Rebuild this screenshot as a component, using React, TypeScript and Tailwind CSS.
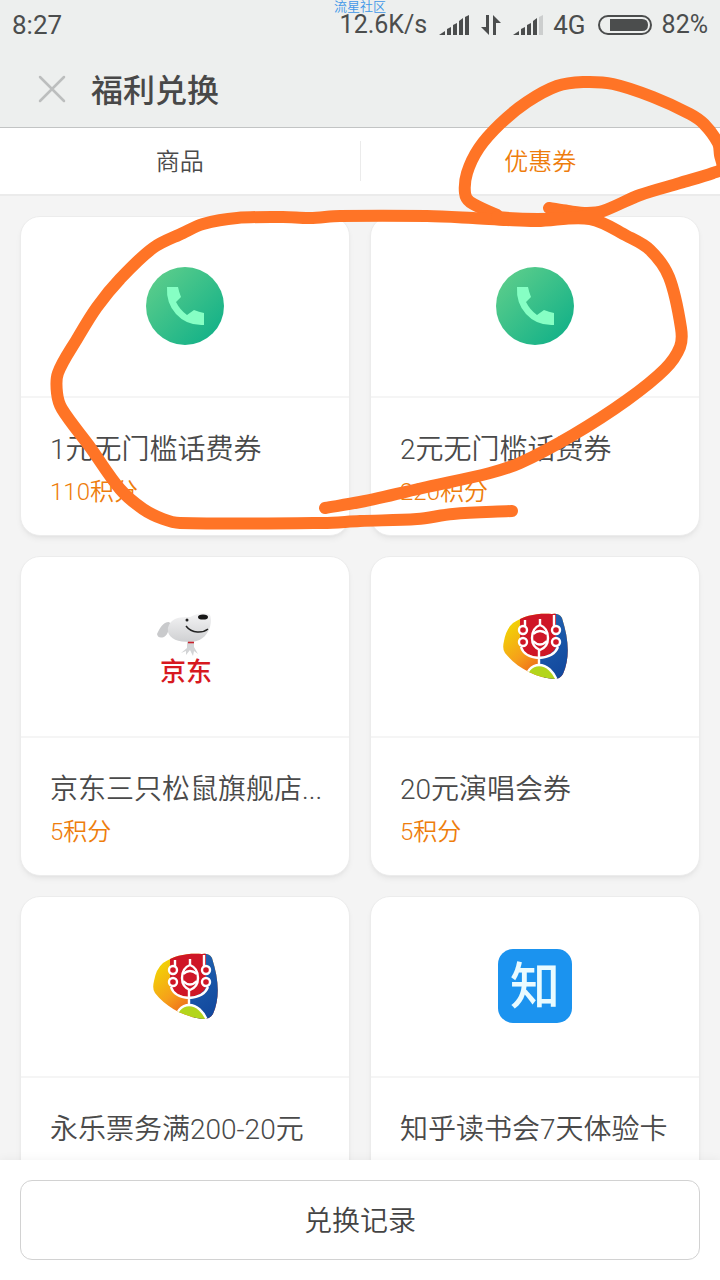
import React from 'react';

type LogoName = 'phone' | 'jd' | 'yongle' | 'zhihu';

interface Coupon {
  title: string;
  points?: number;
  logo: LogoName;
}

const coupons: Coupon[] = [
  { title: '1元无门槛话费券', points: 110, logo: 'phone' },
  { title: '2元无门槛话费券', points: 220, logo: 'phone' },
  { title: '京东三只松鼠旗舰店...', points: 5, logo: 'jd' },
  { title: '20元演唱会券', points: 5, logo: 'yongle' },
  { title: '永乐票务满200-20元', logo: 'yongle' },
  { title: '知乎读书会7天体验卡', logo: 'zhihu' },
];

type Point = [number, number];

const tabLoop: Point[] = [
  [549, 208], [568, 211], [587, 213], [603, 211], [640, 195], [680, 183], [713, 173], [722, 168],
  [720, 155], [718, 143], [704, 124], [690, 114], [653, 97], [613, 84], [583, 82], [557, 86],
  [527, 102], [500, 124], [479, 148], [467, 173], [465, 193], [470, 202], [497, 215],
];

const cardLoop: Point[] = [
  [512, 511], [453, 514], [417, 519], [360, 521], [323, 523], [180, 523], [163, 519], [143, 509],
  [120, 489], [90, 447], [62, 409], [57, 393], [58, 373], [77, 339], [97, 307], [120, 279],
  [153, 248], [183, 233], [203, 224], [237, 218], [283, 217], [310, 218], [340, 216], [427, 216],
  [473, 218], [507, 220], [537, 221], [590, 219], [627, 236], [650, 250], [669, 277], [681, 328],
  [680, 347], [665, 369], [627, 400], [573, 435], [520, 463], [490, 473], [427, 487], [360, 502],
  [325, 508],
];

// Unit direction of the curve at point i
const direction = (pts: Point[], i: number): Point => {
  const a = pts[Math.max(i - 1, 0)];
  const b = pts[Math.min(i + 1, pts.length - 1)];
  const len = Math.hypot(b[0] - a[0], b[1] - a[1]);
  return [(b[0] - a[0]) / len, (b[1] - a[1]) / len];
};

const smooth = (pts: Point[]) => {
  let d = `M${pts[0][0]} ${pts[0][1]}`;
  for (let i = 0; i < pts.length - 1; i++) {
    const [x1, y1] = pts[i];
    const [x2, y2] = pts[i + 1];
    const reach = Math.hypot(x2 - x1, y2 - y1) / 3;
    const from = direction(pts, i);
    const to = direction(pts, i + 1);
    d += `C${x1 + from[0] * reach} ${y1 + from[1] * reach} ${x2 - to[0] * reach} ${y2 - to[1] * reach} ${x2} ${y2}`;
  }
  return d;
};

const Marker: React.FC = () => (
  <svg
    viewBox="0 0 720 540"
    aria-hidden="true"
    className="absolute left-0 top-0 w-full pointer-events-none"
    fill="none"
    stroke="#ff7426"
    strokeWidth="12"
    strokeLinecap="round"
    strokeLinejoin="round"
  >
    <path d={smooth(tabLoop)} />
    <path d={smooth(cardLoop)} />
    <path d="M497 217Q545 222 597 215" />
  </svg>
);

const PhoneLogo: React.FC<{ id: string }> = ({ id }) => (
  <svg width="80" height="80" viewBox="0 0 80 80" aria-hidden="true">
    <defs>
      <linearGradient id={id} x1="0.1" y1="0.1" x2="0.9" y2="0.9">
        <stop offset="0" stopColor="#5bcd8b" />
        <stop offset="1" stopColor="#13b188" />
      </linearGradient>
    </defs>
    <circle cx="40" cy="40" r="39" fill={`url(#${id})`} />
    <path
      d="M22 21H33Q34 26 36 31L31 36Q35 44 42 49L49 44Q54 46 59 47V59Q42 60 31 48Q21 37 22 21Z"
      fill="#86ffc4"
    />
  </svg>
);

const JdLogo: React.FC = () => (
  <svg width="90" height="90" viewBox="0 0 90 90" aria-hidden="true">
    <defs>
      <linearGradient id="dog" x1="0" y1="0" x2="0" y2="1">
        <stop offset="0" stopColor="#f4f4f5" />
        <stop offset="1" stopColor="#cfd0d2" />
      </linearGradient>
    </defs>
    <path d="M29 21C23 21 20 27 17 33Q18 38 24 36C29 33 29 26 31 23Z" fill="#c9cacc" />
    <path d="M47 41H54L54 46L58 53L54 50L53 55L50 49L46 54L46 50L41 52L47 47Z" fill="#d3d4d6" />
    <path
      d="M29 24C33 16 41 16 50 16C57 12 66 11 70 14Q72 18 70 26C67 36 59 41 50 41C38 41 30 38 28 31Q27 27 29 24Z"
      fill="url(#dog)"
    />
    <ellipse cx="63" cy="16" rx="5" ry="2.6" fill="#171717" />
    <circle cx="47" cy="19" r="1.5" fill="#222" />
    <path d="M46 25C52 33 63 32 68 28" fill="none" stroke="#222" strokeWidth="1.5" />
    <path d="M48 41.5H54" stroke="#c9202a" strokeWidth="1.6" />
    <text
      x="46"
      y="80"
      textAnchor="middle"
      fontSize="26"
      fontWeight="500"
      fill="#d7191f"
      className="font-['Noto_Sans_CJK_SC',sans-serif]"
    >
      京东
    </text>
  </svg>
);

const YongleLogo: React.FC<{ id: string }> = ({ id }) => (
  <svg width="90" height="90" viewBox="0 0 90 90" aria-hidden="true">
    <defs>
      <linearGradient id={`${id}-warm`} x1="0" y1="0.2" x2="0.7" y2="1">
        <stop offset="0.1" stopColor="#f0de00" />
        <stop offset="0.5" stopColor="#f6a01a" />
        <stop offset="0.9" stopColor="#e6401c" />
      </linearGradient>
      <linearGradient id={`${id}-cool`} x1="0" y1="0" x2="0.4" y2="1">
        <stop offset="0" stopColor="#2468b5" />
        <stop offset="1" stopColor="#10449a" />
      </linearGradient>
      <clipPath id={`${id}-shape`}>
        <path d="M23 22C35 14 48 12 62 13Q69 12 72 17C79 39 80 57 73 73Q70 78 65 78C46 77 27 67 15 52Q12 48 14 40Q16 28 23 22Z" />
      </clipPath>
    </defs>
    <g clipPath={`url(#${id}-shape)`}>
      <rect width="90" height="90" fill={`url(#${id}-warm)`} />
      <path d="M64 8H90V90H58L48 56Q66 54 66 38Z" fill={`url(#${id}-cool)`} />
      <path d="M30 8H66V46Q62 55 49 56Q34 54 30 46Z" fill="#cf1626" />
      <path d="M34 82C37 58 60 58 68 82Z" fill="#b3d51c" stroke="#fff" strokeWidth="2.4" />
    </g>
    <g fill="none" stroke="#fff" strokeWidth="2.4">
      <path d="M50 18V25M49 49V63M31 46Q34 56 49 57Q64 56 68 46M35 19V25M64 14V25" />
      <path d="M50 24Q42 27 42 37Q42 46 50 49Q58 46 58 37Q58 27 50 24Z" />
      <path d="M43 33Q50 27 57 33M43 40Q50 47 57 40" />
      <circle cx="33" cy="29" r="4" fill="#cf1626" />
      <circle cx="33" cy="41" r="4" fill="#cf1626" />
      <circle cx="66" cy="29" r="4" fill="#cf1626" />
      <circle cx="66" cy="41" r="4" fill="#cf1626" />
    </g>
  </svg>
);

const ZhihuLogo: React.FC = () => (
  <svg width="74" height="74" viewBox="0 0 74 74" className="overflow-visible" aria-hidden="true">
    <rect width="74" height="74" rx="15" fill="#1b93ef" />
    <text
      x="37"
      y="55"
      textAnchor="middle"
      fontSize="50"
      fontWeight="500"
      fill="#e9fbff"
      className="font-['Noto_Sans_CJK_SC',sans-serif]"
    >
      知
    </text>
  </svg>
);

const CouponLogo: React.FC<{ name: LogoName; id: string }> = ({ name, id }) => {
  if (name === 'phone') return <PhoneLogo id={id} />;
  if (name === 'jd') return <JdLogo />;
  if (name === 'yongle') return <YongleLogo id={id} />;
  return <ZhihuLogo />;
};

const Signal: React.FC<{ weak?: boolean }> = ({ weak }) => (
  <svg width="30" height="20" viewBox="0 0 30 20" fill="#4b4d4d" aria-hidden="true">
    <path d="M0 20L6 16V20ZM8 14L12 12V20H8ZM14 10L18 8V20H14ZM20 6L24 3V20H20Z" />
    <path d="M26 2L30 0V20H26Z" fill={weak ? '#cccece' : '#4b4d4d'} />
  </svg>
);

const StatusBar: React.FC = () => (
  <div className="flex h-[50px] items-center justify-between px-3 font-['Roboto',sans-serif] text-[26px] text-[#4b4d4d]">
    <span>8:27</span>
    <div className="flex items-center">
      <span className="text-[25px] leading-6">12.6K/s</span>
      <span className="ml-3"><Signal /></span>
      <svg className="ml-3" width="20" height="20" viewBox="0 0 20 20" fill="#4b4d4d" aria-hidden="true">
        <path d="M5 0H8V20L0 12H5ZM12 20V0L20 8H15V20Z" />
      </svg>
      <span className="ml-3"><Signal weak /></span>
      <span className="ml-2.5">4G</span>
      <svg className="ml-3" width="54" height="20" viewBox="0 0 54 20" aria-hidden="true">
        <rect x="1" y="1" width="52" height="18" rx="9" fill="none" stroke="#4b4d4d" strokeWidth="2" />
        <path d="M12 4H44Q50 4 50 10Q50 16 44 16H12Z" fill="#4b4d4d" />
      </svg>
      <span className="ml-2.5 text-[25px]">82%</span>
    </div>
  </div>
);

const CouponCard: React.FC<{ coupon: Coupon; id: string }> = ({ coupon, id }) => (
  <a
    href={`#${id}`}
    className="block min-h-80 rounded-[20px] border border-[#ececec] bg-white shadow-md shadow-black/5"
  >
    <div className="flex h-[181px] items-center justify-center border-b-2 border-[#f5f5f5] pb-0.5">
      <CouponLogo name={coupon.logo} id={id} />
    </div>
    <div className="pl-[29px] pt-8">
      <h2 className="whitespace-nowrap text-[28px] leading-10 text-[#4a4a4a]">{coupon.title}</h2>
      {coupon.points && (
        <p className="mt-1 text-2xl leading-9 text-[#ee7d0c]">{coupon.points}积分</p>
      )}
    </div>
  </a>
);

const App: React.FC = () => {
  return (
    <div className="relative flex h-screen flex-col overflow-hidden bg-[#f4f4f4] font-['Roboto','Noto_Sans_CJK_SC',sans-serif] font-[350]">
      <header className="border-b border-[#c2c4c4] bg-[#edefee] font-normal">
        <StatusBar />
        <div className="flex h-[77px] items-center gap-6 px-[37px]">
          <button type="button" aria-label="关闭" className="text-[#bcbebe]">
            <svg width="30" height="30" viewBox="0 0 30 30" fill="none" stroke="currentColor" strokeWidth="2.5" strokeLinecap="round">
              <path d="M3 3L27 27M27 3L3 27" />
            </svg>
          </button>
          <h1 className="pt-1 text-[32px] font-medium text-[#484848]">福利兑换</h1>
        </div>
      </header>

      <nav className="flex h-[68px] items-center border-b-2 border-[#ebebeb] bg-white text-2xl">
        <button type="button" className="h-10 flex-1 border-r border-[#ebebeb] pt-0.5 text-[#4a4a4a]">商品</button>
        <button type="button" className="h-10 flex-1 pt-0.5 text-[#ee7d0c]">优惠券</button>
      </nav>

      <main className="grid min-h-0 flex-1 auto-rows-max grid-cols-2 gap-5 overflow-y-auto p-5 [scrollbar-width:none]">
        {coupons.map((coupon, i) => (
          <CouponCard key={coupon.title} coupon={coupon} id={`coupon-${i + 1}`} />
        ))}
      </main>

      <footer className="relative bg-white p-5 shadow-[0_0_10px_rgba(0,0,0,0.06)]">
        <button type="button" className="h-20 w-full rounded-xl border border-[#d2d2d2] pt-1 text-[28px] text-[#444]">
          兑换记录
        </button>
      </footer>

      <div className="absolute inset-x-0 top-0 text-center text-[13px] leading-[14px] text-[#3f97e8]">流星社区</div>
      <Marker />
    </div>
  );
};

export default App;
